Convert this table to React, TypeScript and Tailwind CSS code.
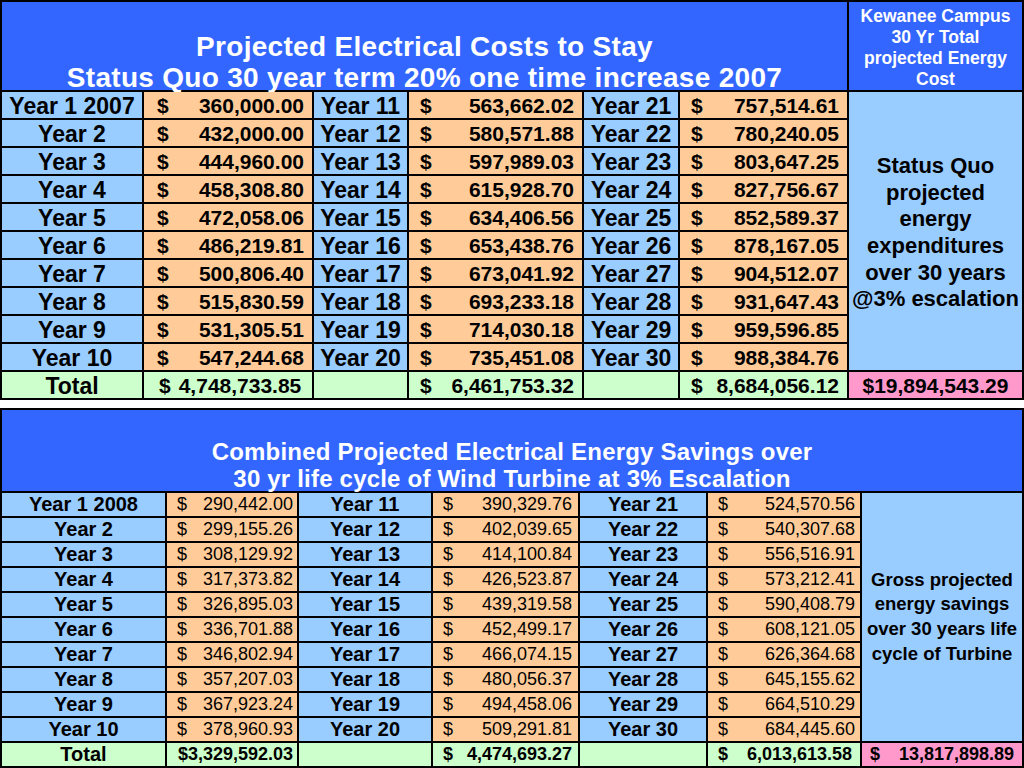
import React from "react";

const topRows: string[][] = [
  ["Year 1 2007", "360,000.00", "Year 11", "563,662.02", "Year 21", "757,514.61"],
  ["Year 2", "432,000.00", "Year 12", "580,571.88", "Year 22", "780,240.05"],
  ["Year 3", "444,960.00", "Year 13", "597,989.03", "Year 23", "803,647.25"],
  ["Year 4", "458,308.80", "Year 14", "615,928.70", "Year 24", "827,756.67"],
  ["Year 5", "472,058.06", "Year 15", "634,406.56", "Year 25", "852,589.37"],
  ["Year 6", "486,219.81", "Year 16", "653,438.76", "Year 26", "878,167.05"],
  ["Year 7", "500,806.40", "Year 17", "673,041.92", "Year 27", "904,512.07"],
  ["Year 8", "515,830.59", "Year 18", "693,233.18", "Year 28", "931,647.43"],
  ["Year 9", "531,305.51", "Year 19", "714,030.18", "Year 29", "959,596.85"],
  ["Year 10", "547,244.68", "Year 20", "735,451.08", "Year 30", "988,384.76"],
];

const bottomRows: string[][] = [
  ["Year 1 2008", "290,442.00", "Year 11", "390,329.76", "Year 21", "524,570.56"],
  ["Year 2", "299,155.26", "Year 12", "402,039.65", "Year 22", "540,307.68"],
  ["Year 3", "308,129.92", "Year 13", "414,100.84", "Year 23", "556,516.91"],
  ["Year 4", "317,373.82", "Year 14", "426,523.87", "Year 24", "573,212.41"],
  ["Year 5", "326,895.03", "Year 15", "439,319.58", "Year 25", "590,408.79"],
  ["Year 6", "336,701.88", "Year 16", "452,499.17", "Year 26", "608,121.05"],
  ["Year 7", "346,802.94", "Year 17", "466,074.15", "Year 27", "626,364.68"],
  ["Year 8", "357,207.03", "Year 18", "480,056.37", "Year 28", "645,155.62"],
  ["Year 9", "367,923.24", "Year 19", "494,458.06", "Year 29", "664,510.29"],
  ["Year 10", "378,960.93", "Year 20", "509,291.81", "Year 30", "684,445.60"],
];

const TopLabel = ({ text, bg = "bg-[#99ccff]" }: { text: string; bg?: string }) => (
  <div className={`${bg} flex items-center justify-center pt-[2px] text-[23px] font-bold leading-[26px] whitespace-nowrap`}>
    {text}
  </div>
);

const TopMoney = ({ value, bg = "bg-[#ffcc99]", pl = "pl-[13px]" }: { value: string; bg?: string; pl?: string }) => (
  <div className={`${bg} flex items-center justify-between ${pl} pr-2 pt-[2px] text-[21px] font-bold leading-[26px] whitespace-nowrap`}>
    <span>$</span>
    <span>{value}</span>
  </div>
);

const BottomLabel = ({ text, bg = "bg-[#99ccff]" }: { text: string; bg?: string }) => (
  <div className={`${bg} flex items-center justify-center text-[20px] font-bold leading-[23px] whitespace-nowrap`}>
    {text}
  </div>
);

const BottomMoney = ({ value, pr = "pr-[5px]", bold = false, bg = "bg-[#ffcc99]" }: { value: string; pr?: string; bold?: boolean; bg?: string }) => (
  <div className={`${bg} flex items-center justify-between pl-[10px] ${pr} text-[18px] leading-[23px] whitespace-nowrap ${bold ? "font-bold" : ""}`}>
    <span>$</span>
    <span>{value}</span>
  </div>
);

export default function App() {
  return (
    <div className="w-[1024px] h-[768px] bg-white font-['Liberation_Sans',Arial,Helvetica,sans-serif] text-black overflow-hidden">
      {/* status quo costs */}
      <div className="grid grid-cols-[140px_168px_93px_173px_94px_167px_173px] grid-rows-[88px_repeat(11,26px)] gap-[2px] p-[2px] bg-black">
        <div className="col-start-7 row-start-2 row-span-10 bg-[#99ccff] flex items-center justify-center text-center text-[22px] font-bold leading-[26.6px] pt-1">
          Status Quo
          <br />
          projected
          <br />
          energy
          <br />
          expenditures
          <br />
          over 30 years
          <br />
          @3% escalation
        </div>
        <div className="col-span-6 bg-[#3366ff] flex items-end justify-center text-center text-white text-[28px] font-bold leading-[31px] tracking-[0.3px]">
          <div className="-mb-[3px]">
            Projected Electrical Costs to Stay
            <br />
            Status Quo 30 year term 20% one time increase 2007
          </div>
        </div>
        <div className="bg-[#3366ff] flex items-center justify-center text-center text-white text-[17.5px] font-bold leading-[21px] pt-1">
          Kewanee Campus
          <br />
          30 Yr Total
          <br />
          projected Energy
          <br />
          Cost
        </div>
        {topRows.map((r) => (
          <React.Fragment key={r[0]}>
            <TopLabel text={r[0]} />
            <TopMoney value={r[1]} />
            <TopLabel text={r[2]} />
            <TopMoney value={r[3]} pl="pl-[11px]" />
            <TopLabel text={r[4]} />
            <TopMoney value={r[5]} pl="pl-[11px]" />
          </React.Fragment>
        ))}
        <TopLabel text="Total" bg="bg-[#ccffcc]" />
        <div className="bg-[#ccffcc] flex items-center gap-[8px] pl-[15px] pt-[2px] text-[21px] font-bold leading-[26px] whitespace-nowrap">
          <span>$</span>
          <span>4,748,733.85</span>
        </div>
        <div className="bg-[#ccffcc]" />
        <TopMoney value="6,461,753.32" bg="bg-[#ccffcc]" pl="pl-[11px]" />
        <div className="bg-[#ccffcc]" />
        <TopMoney value="8,684,056.12" bg="bg-[#ccffcc]" pl="pl-[11px]" />
        <div className="bg-[#ff99cc] flex items-center justify-center pt-[2px] text-[21px] font-bold leading-[26px] whitespace-nowrap">
          $19,894,543.29
        </div>
      </div>

      <div className="h-[8px]" />

      {/* wind turbine savings */}
      <div className="grid grid-cols-[163px_130px_132px_145px_126px_152px_160px] grid-rows-[81px_repeat(11,23px)] gap-[2px] p-[2px] bg-black">
        <div className="col-start-7 row-start-2 row-span-10 bg-[#99ccff] flex items-center justify-center text-center text-[18.5px] font-bold leading-[24.6px] whitespace-nowrap">
          Gross projected
          <br />
          energy savings
          <br />
          over 30 years life
          <br />
          cycle of Turbine
        </div>
        <div className="col-span-7 bg-[#3366ff] flex items-end justify-center text-center text-white text-[24px] font-bold leading-[27px] tracking-[0.2px]">
          <div className="-mb-[1px]">
            Combined Projected Electrical Energy Savings over
            <br />
            30 yr life cycle of Wind Turbine at 3% Escalation
          </div>
        </div>
        {bottomRows.map((r) => (
          <React.Fragment key={r[0]}>
            <BottomLabel text={r[0]} />
            <BottomMoney value={r[1]} pr="pr-[4px]" />
            <BottomLabel text={r[2]} />
            <BottomMoney value={r[3]} pr="pr-[6px]" />
            <BottomLabel text={r[4]} />
            <BottomMoney value={r[5]} />
          </React.Fragment>
        ))}
        <BottomLabel text="Total" bg="bg-[#ccffcc]" />
        <div className="bg-[#ccffcc] flex items-center justify-end pr-[4px] text-[18px] font-bold leading-[23px] whitespace-nowrap">
          $3,329,592.03
        </div>
        <div className="bg-[#ccffcc]" />
        <BottomMoney value="4,474,693.27" bg="bg-[#ccffcc]" pr="pr-[6px]" bold />
        <div className="bg-[#ccffcc]" />
        <BottomMoney value="6,013,613.58" bg="bg-[#ccffcc]" pr="pr-[8px]" bold />
        <div className="bg-[#ff99cc] flex items-center justify-between pl-[8px] pr-[8px] text-[18px] font-bold leading-[23px] whitespace-nowrap">
          <span>$</span>
          <span>13,817,898.89</span>
        </div>
      </div>
    </div>
  );
}
